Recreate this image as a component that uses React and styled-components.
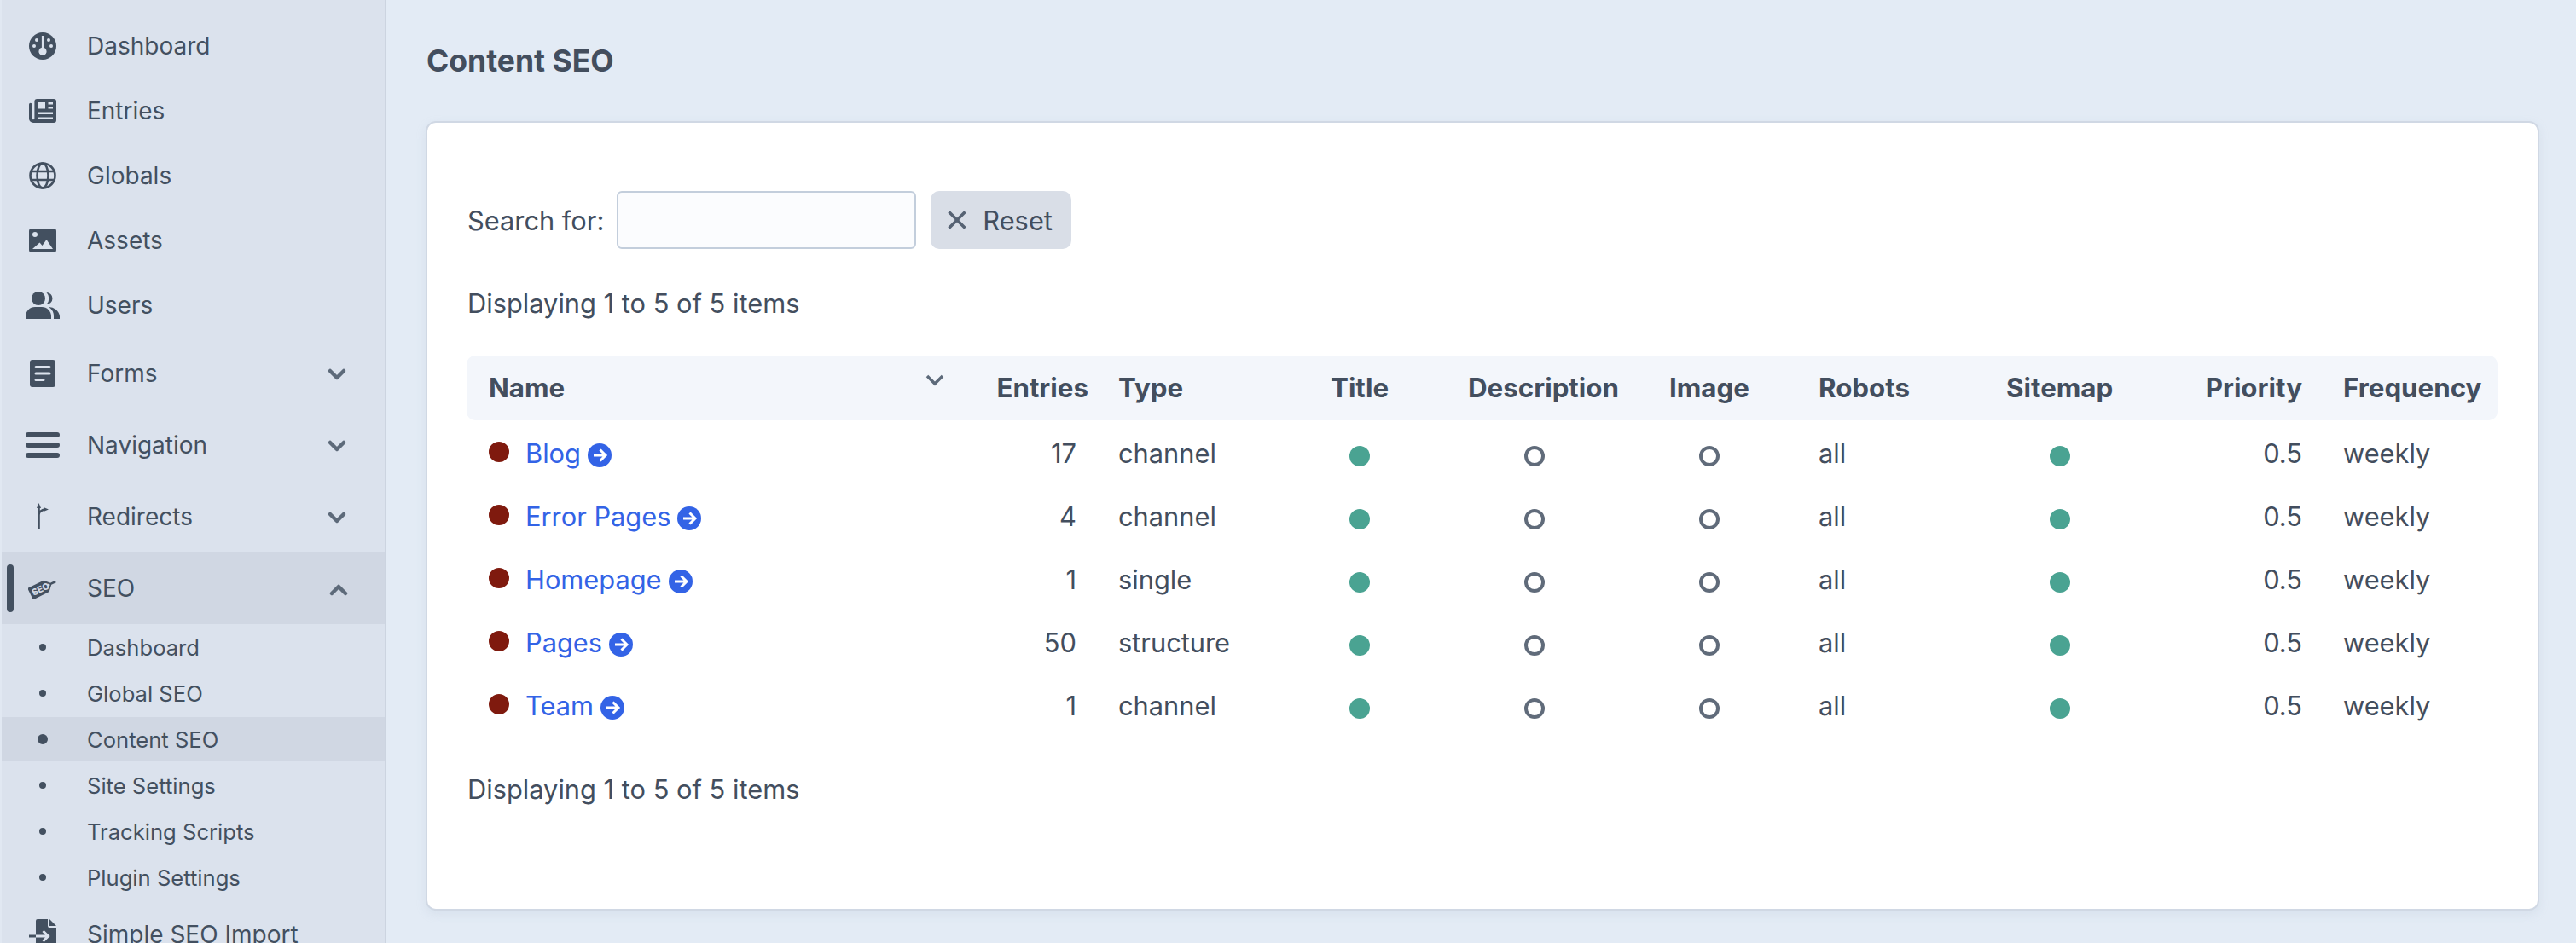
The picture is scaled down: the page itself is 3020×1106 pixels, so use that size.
import React from 'react';
import styled, { createGlobalStyle } from 'styled-components';

const Global = createGlobalStyle`
  html, body { margin: 0; padding: 0; height: 1106px; overflow: hidden; background: #e3ebf5; }
  body { font-family: Inter, "Noto Sans", sans-serif; color: #434e5e; }
  * { box-sizing: border-box; }
`;
const Shell = styled.div`display: flex; width: 3020px; height: 1106px; overflow: hidden;`;
const Side = styled.nav`
  flex: 0 0 453px; height: 1106px; padding-top: 16px; overflow: hidden;
  background: #dbe2ed; border-left: 2px solid #e1e8f2; border-right: 2px solid #ccd4e0;
`;
const NavRow = styled.div`
  position: relative; display: flex; align-items: center;
  height: ${p => p.$h}px; margin-right: ${p => p.$active ? '-2px' : '0'};
  padding-left: 28px; font-size: 28px; color: #435060;
  background: ${p => p.$active ? '#d0d7e3' : 'transparent'};
`;
const IconSlot = styled.span`
  flex: 0 0 40px; width: 40px; display: flex; align-items: center; justify-content: center; margin-right: 32px;
  svg { display: block; }
`;
const NavLabel = styled.span`flex: 1; white-space: nowrap; padding-top: ${p => p.$pt || 0}px;`;
const Chevron = styled.svg`width: 24px; height: 16px; margin-right: 44px; margin-top: 2px; flex: none;`;
const ActivePill = styled.span`
  position: absolute; left: 6px; top: 14px; width: 8px; height: 56px; border-radius: 4px; background: #435060;
`;
const SubRow = styled.div`
  display: flex; align-items: center; height: ${p => p.$active ? 52 : 54}px;
  margin: ${p => p.$active ? '1px 0' : '0'}; margin-right: ${p => p.$active ? '-2px' : '0'};
  padding-left: 28px; font-size: 25.6px; color: #435060;
  background: ${p => p.$active ? '#d0d7e3' : 'transparent'};
`;
const Bullet = styled.span`
  width: ${p => p.$active ? 12 : 8}px; height: ${p => p.$active ? 12 : 8}px; border-radius: 50%; background: #435060;
`;
const Main = styled.main`flex: 1; min-width: 0; padding: 0 43px 0 47px;`;
const PageTitle = styled.h1`
  margin: 0; height: 142px; padding-top: 52px; font-size: 35.5px; line-height: 40px; font-weight: 700; color: #434e5e;
`;
const Card = styled.section`
  height: 926px; background: #fff; border: 2px solid #d0d8e4; border-radius: 12px;
  box-shadow: 0 4px 12px rgba(160,175,200,.18);
  padding: 79px 47px 0 47px;
  margin-left: -1px;
`;
const SearchBar = styled.div`display: flex; align-items: center; height: 70px; font-size: 30.8px;`;
const SearchLabel = styled.label`margin-right: 15px;`;
const SearchInput = styled.input`
  width: 351px; height: 68px; background: #fbfcfe; border: 2px solid #c3cedc; border-radius: 6px; outline: 0;
`;
const ResetButton = styled.button`
  display: flex; align-items: center; height: 68px; width: 165px; margin-left: 17px; padding: 0 0 0 20px; border: 0; border-radius: 10px;
  background: #d9dee7; color: #434e5e; font: inherit; font-size: 30.8px;
  svg { margin-right: 19px; flex: none; }
`;
const Status = styled.div`font-size: 30.8px; line-height: 40px; margin-top: ${p => p.$mt}px;`;
const Table = styled.table`
  width: 2381px; table-layout: fixed; border-collapse: separate; border-spacing: 0;
  margin: ${p => p.$mt || 0}px 0 0 -1px;
`;
const Th = styled.th`
  height: 76px; background: #f3f6fb; padding: ${p => p.$right ? `0 ${p.$pr}px 0 0` : '0 0 0 26px'};
  text-align: ${p => p.$right ? 'right' : 'left'}; font-size: 31.3px; font-weight: 700; color: #434e5e; position: relative;
  white-space: nowrap;
  &:first-child { border-radius: 10px 0 0 10px; }
  &:last-child { border-radius: 0 10px 10px 0; }
`;
const SortIcon = styled.svg`position: absolute; left: 538px; top: 22px; width: 22px; height: 14px;`;
const Td = styled.td`
  height: 74px; padding: ${p => p.$right ? `2px ${p.$pr}px 0 0` : `2px 0 0 ${p.$pl ?? 26}px`};
  text-align: ${p => p.$right ? 'right' : 'left'}; font-size: 30.8px; color: #434e5e; white-space: nowrap;
`;
const NameCell = styled.div`display: flex; align-items: center;`;
const RedDot = styled.span`width: 24px; height: 24px; border-radius: 50%; background: #7f1a0e; margin-right: 19px; margin-top: -2px;`;
const EntryLink = styled.a`color: #3363e6; text-decoration: none;`;
const ArrowBadge = styled.svg`width: 28px; height: 28px; margin-left: 8px; margin-top: 5px;`;
const StateDot = styled.span`
  display: block; width: 24px; height: 24px; border-radius: 50%; margin-top: 8px;
  background: ${p => p.$on ? '#4aa392' : 'transparent'};
  border: ${p => p.$on ? '0' : '4px solid #606b7a'};
`;

const C = '#435060', B = '#dbe2ed', A = '#d0d7e3';
const Gauge = () => <svg width="32" height="32" viewBox="0 0 32 32"><circle cx="16" cy="16" r="16" fill={C}/><path d="M14.900 4h2.200v13.800a4.600 4.600 0 1 1-2.200 0z" fill={B}/><circle cx="9" cy="9" r="2" fill={B}/><circle cx="23" cy="9" r="2" fill={B}/><circle cx="6" cy="16" r="2" fill={B}/><circle cx="26" cy="16" r="2" fill={B}/></svg>;
const News = () => <svg width="32" height="28" viewBox="0 0 32 28"><path fill={C} fillRule="evenodd" d="M9.400 0H29a3 3 0 0 1 3 3v22a3 3 0 0 1-3 3H5a5 5 0 0 1-5-5V6.500a1.700 1.700 0 0 1 3.400 0V23a1.700 1.700 0 0 0 3 .5V3a3 3 0 0 1 3-3zM10 4v7.500h9V4zM22.500 4v2.500H28V4zM22.500 9v2.500H28V9zM10 15.500V18h18v-2.500zM10 21.500V24h18v-2.500z"/></svg>;
const Globe = () => <svg width="32" height="32" viewBox="0 0 32 32" fill="none" stroke={C} strokeWidth="2.600"><circle cx="16" cy="16" r="14.500"/><ellipse cx="16" cy="16" rx="6.500" ry="14.500"/><path d="M2 11h28M2 21h28"/></svg>;
const Picture = () => <svg width="32" height="28" viewBox="0 0 32 28"><path fill={C} fillRule="evenodd" d="M3 0h26a3 3 0 0 1 3 3v22a3 3 0 0 1-3 3H3a3 3 0 0 1-3-3V3a3 3 0 0 1 3-3zM7 4a3 3 0 1 0 0 6 3 3 0 0 0 0-6zM4 24h24l-7.500-11-5 7-3-3.500z"/></svg>;
const Users = () => <svg width="40" height="32" viewBox="0 0 40 32" fill={C}><circle cx="15" cy="8" r="8"/><path d="M0 32v-3a11 11 0 0 1 11-11h8a11 11 0 0 1 11 11v3z"/><path d="M24.500 1a7 7 0 1 1 0 14 10 10 0 0 0 0-14z"/><path d="M27 18a13 13 0 0 1 13 11v3h-7v-3a13 13 0 0 0-6-11z"/></svg>;
const Forms = () => <svg width="30" height="32" viewBox="0 0 30 32"><path fill={C} fillRule="evenodd" d="M3 0h24a3 3 0 0 1 3 3v26a3 3 0 0 1-3 3H3a3 3 0 0 1-3-3V3a3 3 0 0 1 3-3zM7 7a1.500 1.500 0 0 0 0 3h16a1.500 1.500 0 0 0 0-3zM7 14.500a1.500 1.500 0 0 0 0 3h16a1.500 1.500 0 0 0 0-3zM7 22a1.500 1.500 0 0 0 0 3h9a1.500 1.500 0 0 0 0-3z"/></svg>;
const Bars = () => <svg width="40" height="32" viewBox="0 0 40 32" fill={C}><rect y="1" width="40" height="6" rx="3"/><rect y="13" width="40" height="6" rx="3"/><rect y="25" width="40" height="6" rx="3"/></svg>;
const Sign = () => <svg width="40" height="32" viewBox="0 0 40 32"><path fill="none" stroke={C} strokeWidth="2.600" d="M15.500 5v26M15.500 14c0-4 4-6 7-6.500"/><path fill={C} d="M15.500 0l2.500 6h-5zM27 7.500l-6 2.500v-5z"/></svg>;
const SeoTag = () => <svg width="34" height="28" viewBox="0 0 34 28"><g transform="rotate(-26 16 14)"><path fill={C} d="M2 6.500h20l7 7.500-7 7.500H2a1 1 0 0 1-1-1v-13a1 1 0 0 1 1-1z"/><text x="3.500" y="18" fontFamily="Inter, sans-serif" fontWeight="800" fontSize="10.500" fill={A}>SEO</text><circle cx="25" cy="14" r="1.400" fill={A}/><path d="M28 14h6" stroke={C} strokeWidth="2.500"/></g></svg>;
const FileIn = () => <svg width="32" height="32" viewBox="0 0 32 32"><path fill={C} d="M10 0h12v8a2 2 0 0 0 2 2h8v22H8V2a2 2 0 0 1 2-2zM24 0l8 8h-8zM0 18.500h8v3H0z"/><path d="M8 20h14M16.500 14l6 6-6 6" fill="none" stroke={B} strokeWidth="3"/></svg>;

const Chev = ({ up }) => (
  <Chevron viewBox="0 0 24 16" fill="none" stroke="#5d6a7a" strokeWidth="4.500" strokeLinecap="round" strokeLinejoin="round">
    <path d={up ? 'M4 13l8-8 8 8' : 'M4 4l8 8 8-8'} />
  </Chevron>
);

const topNav = [['Dashboard', Gauge], ['Entries', News], ['Globals', Globe], ['Assets', Picture], ['Users', Users]];
const expandNav = [['Forms', Forms], ['Navigation', Bars], ['Redirects', Sign]];
const subNav = ['Dashboard', 'Global SEO', 'Content SEO', 'Site Settings', 'Tracking Scripts', 'Plugin Settings'];

const cols = [
  { label: 'Name', w: 603 },
  { label: 'Entries', w: 135, right: true, pr: 9 },
  { label: 'Type', w: 249 },
  { label: 'Title', w: 161 },
  { label: 'Description', w: 236 },
  { label: 'Image', w: 175 },
  { label: 'Robots', w: 220 },
  { label: 'Sitemap', w: 214 },
  { label: 'Priority', w: 181, right: true, pr: 22 },
  { label: 'Frequency', w: 207 },
];
const rows = [
  ['Blog', 17, 'channel'],
  ['Error Pages', 4, 'channel'],
  ['Homepage', 1, 'single'],
  ['Pages', 50, 'structure'],
  ['Team', 1, 'channel'],
];

export default function App() {
  return (
    <Shell>
      <Global />
      <Side>
        {topNav.map(([t, I]) => (
          <NavRow key={t} $h={76}><IconSlot><I /></IconSlot><NavLabel>{t}</NavLabel></NavRow>
        ))}
        {expandNav.map(([t, I]) => (
          <NavRow key={t} $h={84}><IconSlot><I /></IconSlot><NavLabel>{t}</NavLabel><Chev /></NavRow>
        ))}
        <NavRow $h={84} $active><ActivePill /><IconSlot><SeoTag /></IconSlot><NavLabel>SEO</NavLabel><Chev up /></NavRow>
        {subNav.map(t => (
          <SubRow key={t} $active={t === 'Content SEO'}>
            <IconSlot><Bullet $active={t === 'Content SEO'} /></IconSlot>{t}
          </SubRow>
        ))}
        <NavRow $h={76}><IconSlot><FileIn /></IconSlot><NavLabel $pt={3}>Simple SEO Import</NavLabel></NavRow>
      </Side>
      <Main>
        <PageTitle>Content SEO</PageTitle>
        <Card>
          <SearchBar>
            <SearchLabel>Search for:</SearchLabel>
            <SearchInput />
            <ResetButton>
              <svg width="22" height="22" viewBox="0 0 22 22" fill="none" stroke="#566273" strokeWidth="3.500"><path d="M1.500 1.500l19 19M20.500 1.500l-19 19" /></svg>
              Reset
            </ResetButton>
          </SearchBar>
          <Status $mt={43}>Displaying 1 to 5 of 5 items</Status>
          <Table $mt={41}>
            <colgroup>{cols.map(c => <col key={c.label} style={{ width: c.w }} />)}</colgroup>
            <thead>
              <tr>
                {cols.map((c, i) => (
                  <Th key={c.label} $right={c.right} $pr={c.pr}>
                    {c.label}
                    {i === 0 && <SortIcon viewBox="0 0 22 14" fill="none" stroke="#5d6a7a" strokeWidth="3.500"><path d="M2 2l9 9 9-9" /></SortIcon>}
                  </Th>
                ))}
              </tr>
            </thead>
            <tbody>
              {rows.map(r => (
                <tr key={r[0]}>
                  <Td>
                    <NameCell>
                      <RedDot />
                      <EntryLink href="#">{r[0]}</EntryLink>
                      <ArrowBadge viewBox="0 0 28 28">
                        <circle cx="14" cy="14" r="14" fill="#3363e6" />
                        <path d="M14.500 7.500L21 14l-6.500 6.500M21 14H7" fill="none" stroke="#fff" strokeWidth="3" />
                      </ArrowBadge>
                    </NameCell>
                  </Td>
                  <Td $right $pr={23}>{r[1]}</Td>
                  <Td>{r[2]}</Td>
                  <Td $pl={48}><StateDot $on /></Td>
                  <Td $pl={92}><StateDot /></Td>
                  <Td $pl={61}><StateDot /></Td>
                  <Td>all</Td>
                  <Td $pl={77}><StateDot $on /></Td>
                  <Td $right $pr={22}>0.5</Td>
                  <Td>weekly</Td>
                </tr>
              ))}
            </tbody>
          </Table>
          <Status $mt={43}>Displaying 1 to 5 of 5 items</Status>
        </Card>
      </Main>
    </Shell>
  );
}
